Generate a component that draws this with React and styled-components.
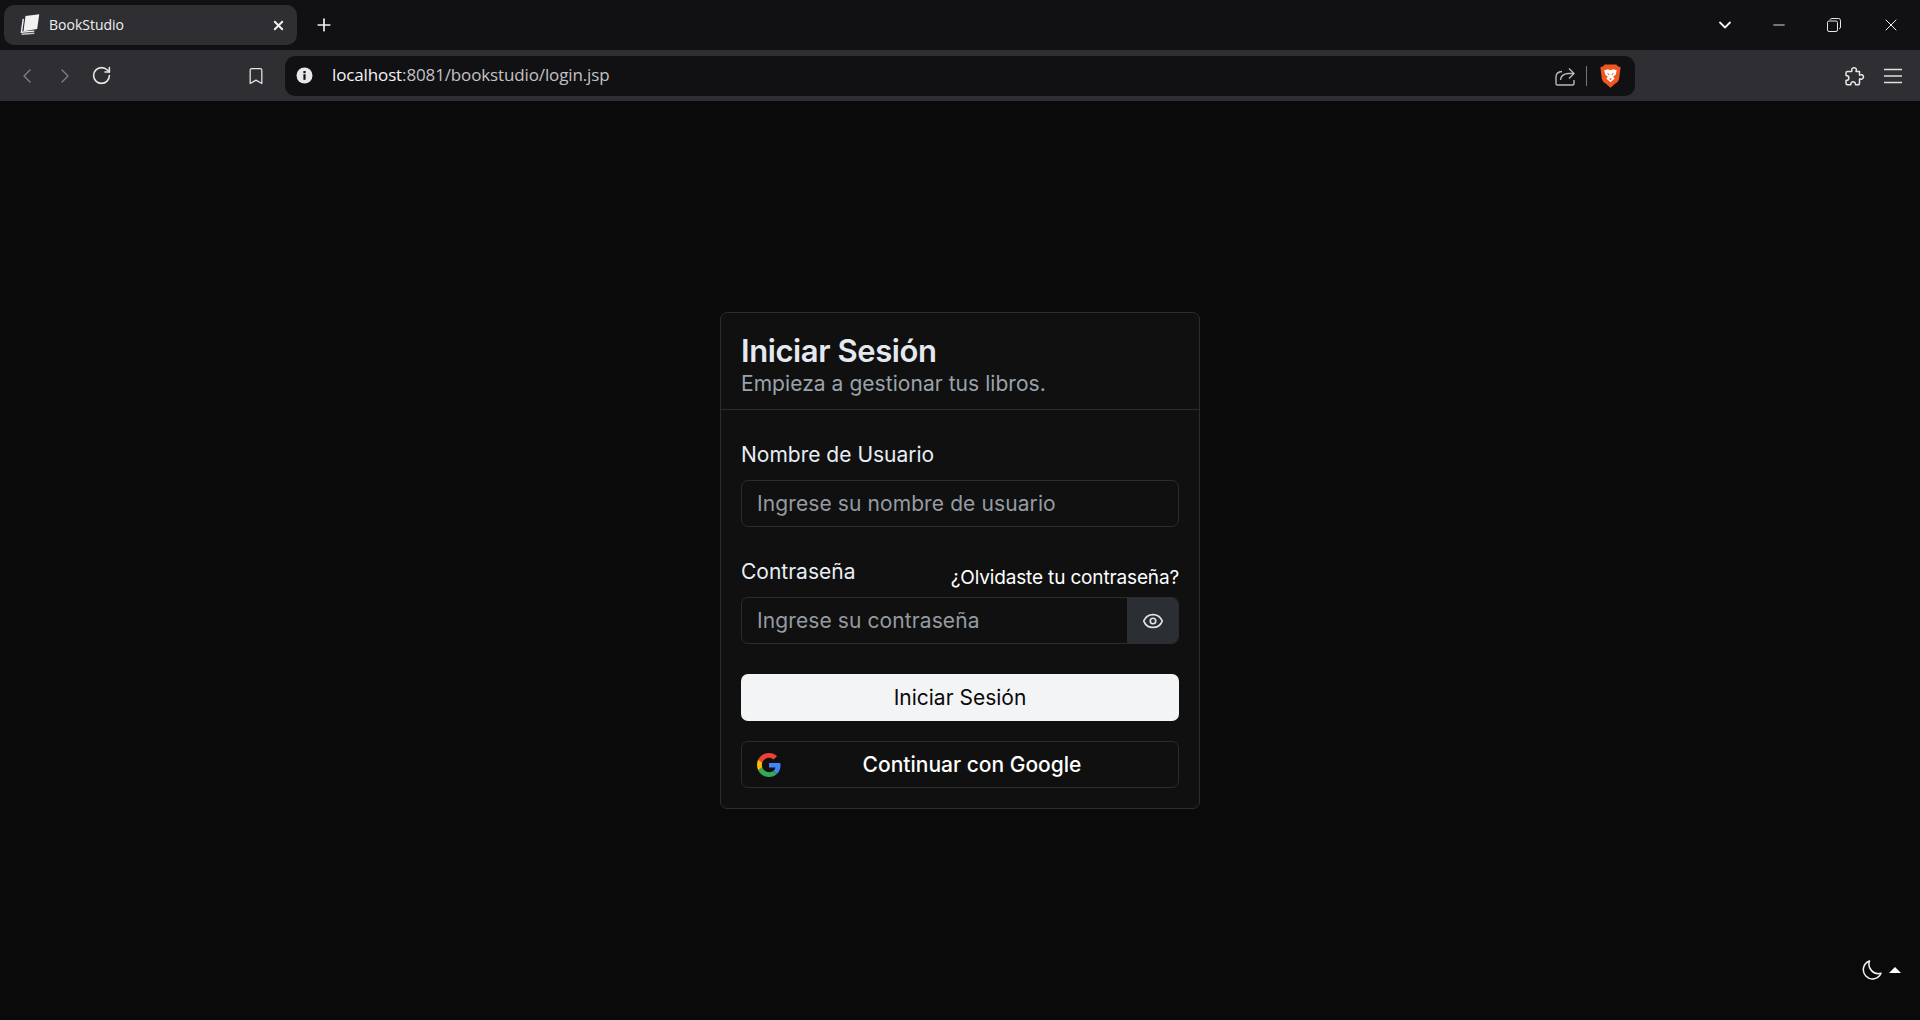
import React from 'react'
import styled, { createGlobalStyle } from 'styled-components'
import { ChevronLeft, ChevronRight, RotateCw, Bookmark, Eye, Plus, X, Minus, ChevronDown } from 'lucide-react'

const GlobalStyle = createGlobalStyle`
  html, body { margin: 0; padding: 0; background: #0a0a0a; }
  * { box-sizing: border-box; }
`

const Window = styled.div`
  width: 1920px;
  height: 1020px;
  display: flex;
  flex-direction: column;
  overflow: hidden;
  font-family: Inter, "Liberation Sans", sans-serif;
`
const TabStrip = styled.div`
  height: 50px;
  flex: none;
  display: flex;
  align-items: center;
  padding-left: 4px;
  background: #111113;
  color: #f2f2f2;
`
const Tab = styled.div`
  width: 293px;
  height: 40px;
  display: flex;
  align-items: center;
  padding: 0 11px 0 16px;
  background: #2f2f33;
  border-radius: 10px;
  font-family: "Open Sans", "Liberation Sans", sans-serif;
  font-size: 14px;
  color: #f0f0f0;
`
const TabTitle = styled.span`
  flex: 1;
  margin-left: 7px;
  padding-bottom: 1px;
`
const NewTab = styled.div`
  display: flex;
  margin-left: 17px;
`
const WindowControls = styled.div`
  margin-left: auto;
  display: flex;
  align-items: center;
`
const WindowButton = styled.div`
  width: ${p => p.$w}px;
  display: flex;
  justify-content: center;
`
const Toolbar = styled.div`
  height: 51px;
  flex: none;
  display: flex;
  align-items: center;
  background: #2f2f33;
  color: #e6e6e6;
`
const NavGroup = styled.div`
  width: 285px;
  flex: none;
  display: flex;
  align-items: center;
  padding-left: 15px;
`
const NavButton = styled.div`
  width: ${p => p.$w || 38}px;
  display: flex;
  justify-content: ${p => p.$end ? 'flex-end' : 'flex-start'};
  color: ${p => p.$dim ? '#808085' : '#e6e6e6'};
`
const AddressBar = styled.div`
  width: 1350px;
  height: 40px;
  flex: none;
  display: flex;
  align-items: center;
  padding: 0 14px 0 11px;
  background: #111113;
  border-radius: 10px;
`
const Url = styled.div`
  flex: 1;
  margin-left: 19px;
  padding-bottom: 2px;
  font-family: "Open Sans", "Liberation Sans", sans-serif;
  font-size: 17px;
  letter-spacing: -0.13px;
  color: #c2c2c6;
  b { font-weight: 400; color: #f4f4f4; }
`
const Divider = styled.div`
  width: 1px;
  height: 20px;
  margin: 0 13px 0 11px;
  background: #77777b;
`
const ToolbarEnd = styled.div`
  flex: 1;
  display: flex;
  align-items: center;
  justify-content: flex-end;
  gap: 18px;
  padding-right: 17px;
`
const Page = styled.main`
  flex: 1;
  display: flex;
  align-items: center;
  justify-content: center;
  background: #0a0a0a;
  position: relative;
`
const Card = styled.section`
  width: 480px;
  height: 497px;
  background: #101010;
  border: 1px solid #2b2c2e;
  border-radius: 7px;
  color: #f3f4f6;
`
const CardHeader = styled.header`
  height: 97px;
  padding: 18px 20px 0;
  border-bottom: 1px solid #2b2c2e;
`
const Title = styled.h1`
  margin: 0;
  font-size: 31px;
  line-height: 39px;
  font-weight: 600;
  letter-spacing: -0.4px;
  color: #e4e9f0;
`
const Subtitle = styled.p`
  margin: 1px 0 0;
  font-size: 21px;
  line-height: 26px;
  letter-spacing: 0.05px;
  color: #9aa3ab;
`
const CardBody = styled.div`
  padding: 30px 20px 0;
  display: flex;
  flex-direction: column;
`
const Label = styled.label`
  display: block;
  font-size: 21px;
  line-height: 30px;
  color: #e8eef4;
`
const LabelRow = styled.div`
  margin-top: 30px;
  height: 40px;
  display: flex;
  justify-content: space-between;
`
const Forgot = styled.a`
  font-size: 19px;
  line-height: 30px;
  padding-top: 6px;
  letter-spacing: -0.15px;
  color: #fff;
`
const InputGroup = styled.div`
  margin-top: ${p => p.$mt || 0}px;
  height: 47px;
  display: flex;
  border: 1px solid #2b2c2e;
  border-radius: 7px;
  overflow: hidden;
`
const Input = styled.input`
  flex: 1;
  min-width: 0;
  padding: 0 15px;
  border: 0;
  outline: 0;
  background: transparent;
  font-family: inherit;
  font-size: 21px;
  letter-spacing: 0.1px;
  color: #f3f4f6;
  &::placeholder { color: #959ba2; opacity: 1; }
`
const EyeButton = styled.div`
  width: 51px;
  display: flex;
  align-items: center;
  justify-content: center;
  background: #2b2f33;
  color: #dfe3e7;
`
const PrimaryButton = styled.button`
  margin-top: 30px;
  height: 47px;
  border: 0;
  border-radius: 7px;
  background: #f3f4f6;
  font-family: inherit;
  font-size: 21px;
  color: #0a0a0a;
`
const GoogleButton = styled.button`
  margin-top: 20px;
  height: 47px;
  display: flex;
  align-items: center;
  padding: 0 15px;
  border: 1px solid #2b2c2e;
  border-radius: 7px;
  background: transparent;
  font-family: inherit;
  font-size: 21px;
  font-weight: 500;
  color: #fff;
  span { flex: 1; text-align: center; }
`
const ThemeToggle = styled.div`
  position: absolute;
  right: 19px;
  bottom: 40px;
  display: flex;
  align-items: center;
  gap: 7px;
  color: #f2f2f2;
`
const Caret = styled.div`
  width: 0;
  height: 0;
  border-left: 6px solid transparent;
  border-right: 6px solid transparent;
  border-bottom: 6px solid #fff;
`

const BookIcon = () => (
  <svg width="22" height="22" viewBox="0 0 20 20">
    <path d="M5 1.8 L17.5 0.2 L15.6 13.6 L3.2 15.6 Z" fill="#f2f2f2" />
    <path d="M3 4.5 L1.3 16.5 L13 15.6" fill="none" stroke="#f2f2f2" strokeWidth="1.3" />
    <path d="M1.5 18.4 L13 17.5" fill="none" stroke="#c8c8c8" strokeWidth="1.2" />
  </svg>
)
const RestoreIcon = () => (
  <svg width="14" height="14" viewBox="0 0 14 14" fill="none" stroke="#e6e6e6" strokeWidth="1">
    <rect x="0.5" y="3" width="10" height="10.5" rx="1.5" />
    <path d="M3 1.8 Q3.4 .5 5 .5 H11.5 Q13.5 .5 13.5 2.5 V9 Q13.5 10.4 12.2 10.8" />
  </svg>
)
const InfoIcon = () => (
  <svg width="17" height="17" viewBox="0 0 17 17">
    <circle cx="8.5" cy="8.5" r="8" fill="#e8e8e8" />
    <rect x="7.4" y="7.2" width="2.2" height="5.6" fill="#111113" />
    <rect x="7.4" y="4" width="2.2" height="2.2" fill="#111113" />
  </svg>
)
const ShareIcon = () => (
  <svg width="20" height="20" viewBox="0 0 20 20" fill="none" stroke="#b8b8bc" strokeWidth="1.4">
    <path d="M7 5.5 Q1 6 1 11 V17.5 Q1 19 2.5 19 H17.5 Q19 19 19 17.5 V14" />
    <path d="M5.5 14 Q6 8 13 7.5 H18.5 M14 2.5 L19 7.5 L14 12.5" />
  </svg>
)
const BraveIcon = () => (
  <svg width="21" height="24" viewBox="0 0 20 23">
    <path d="M4.5 0.5 H15.5 L17 2.2 L19.7 3.2 L18.2 14.5 Q17.5 17 15 18.5 L10 22.7 L5 18.5 Q2.5 17 1.8 14.5 L0.3 3.2 L3 2.2 Z" fill="#f1561f" />
    <path d="M4 6 L7.5 5 L10 6 L12.5 5 L16 6 L15 10 L12.5 12.5 L14 14 L10 17.5 L6 14 L7.5 12.5 L5 10 Z" fill="#fff" />
    <path d="M6.5 8.5 L9 9.5 L8.5 11 Z M13.5 8.5 L11 9.5 L11.5 11 Z M8.5 14 H11.5 L10 15.5 Z" fill="#f1561f" />
  </svg>
)
const PuzzleIcon = () => (
  <svg width="20" height="20" viewBox="0 0 20 20" fill="none" stroke="#e6e6e6" strokeWidth="1.5" strokeLinejoin="round">
    <path d="M2.5 5.5 H6.5 Q7 5.5 6.8 4.6 C5.8 1.6 11.2 .6 11.4 3.6 Q11.4 4.6 11 5 Q10.8 5.5 11.5 5.5 H14.5 V8.8 Q14.5 9.5 15.2 9 C17.6 7.4 20.2 11.6 17 13 Q15.8 13.4 15 12.8 Q14.5 12.5 14.5 13.2 V17 Q14.5 18.8 12.8 18.8 H10.5 C10.8 14.8 5.4 14.8 5.8 18.8 H3 Q1 18.8 1 17 V14.5 C4.8 14.4 4.8 9.6 1 9.6 V7 Q1 5.5 2.5 5.5 Z" />
  </svg>
)
const MenuIcon = () => (
  <svg width="20" height="16" viewBox="0 0 20 16" fill="none" stroke="#e0e0e0" strokeWidth="1.5">
    <path d="M1 1.5 H19 M1 8 H19 M1 14.5 H19" />
  </svg>
)
const MoonIcon = () => (
  <svg width="20" height="20" viewBox="0 0 20 20" fill="none" stroke="#f2f2f2" strokeWidth="1.5" strokeLinejoin="round">
    <path d="M7.5 1 A9.2 9.2 0 1 0 19 13.3 A9.5 9.5 0 0 1 7.5 1 Z" />
  </svg>
)
const GoogleIcon = () => (
  <svg width="24" height="24" viewBox="0 0 48 48">
    <path fill="#EA4335" d="M24 9.5c3.54 0 6.71 1.22 9.21 3.6l6.85-6.85C35.9 2.38 30.47 0 24 0 14.62 0 6.51 5.38 2.56 13.22l7.98 6.19C12.43 13.72 17.74 9.5 24 9.5z" />
    <path fill="#4285F4" d="M46.98 24.55c0-1.57-.15-3.09-.38-4.55H24v9.02h12.94c-.58 2.96-2.26 5.48-4.78 7.18l7.73 6c4.51-4.18 7.09-10.36 7.09-17.65z" />
    <path fill="#FBBC05" d="M10.53 28.59c-.48-1.45-.76-2.99-.76-4.59s.27-3.14.76-4.59l-7.98-6.19C.92 16.46 0 20.12 0 24c0 3.88.92 7.54 2.56 10.78l7.97-6.19z" />
    <path fill="#34A853" d="M24 48c6.48 0 11.93-2.13 15.89-5.81l-7.73-6c-2.15 1.45-4.92 2.3-8.16 2.3-6.26 0-11.57-4.22-13.47-9.91l-7.98 6.19C6.51 42.62 14.62 48 24 48z" />
  </svg>
)

const App = () => (
  <Window>
    <GlobalStyle />
    <TabStrip>
      <Tab>
        <BookIcon />
        <TabTitle>BookStudio</TabTitle>
        <X size={15} strokeWidth={3} />
      </Tab>
      <NewTab><Plus size={20} strokeWidth={2} /></NewTab>
      <WindowControls>
        <WindowButton $w={52}><ChevronDown size={20} strokeWidth={2.2} /></WindowButton>
        <WindowButton $w={55}><Minus size={18} strokeWidth={1.2} /></WindowButton>
        <WindowButton $w={56}><RestoreIcon /></WindowButton>
        <WindowButton $w={58}><X size={20} strokeWidth={1.2} /></WindowButton>
      </WindowControls>
    </TabStrip>
    <Toolbar>
      <NavGroup>
        <NavButton $dim><ChevronLeft size={24} strokeWidth={1.3} /></NavButton>
        <NavButton $dim><ChevronRight size={24} strokeWidth={1.3} /></NavButton>
        <NavButton $w={50}><RotateCw size={21} strokeWidth={1.8} /></NavButton>
        <NavButton $w={125} $end><Bookmark size={20} strokeWidth={1.5} /></NavButton>
      </NavGroup>
      <AddressBar>
        <InfoIcon />
        <Url><b>localhost</b>:8081/bookstudio/login.jsp</Url>
        <ShareIcon />
        <Divider />
        <BraveIcon />
      </AddressBar>
      <ToolbarEnd>
        <PuzzleIcon />
        <MenuIcon />
      </ToolbarEnd>
    </Toolbar>
    <Page>
      <Card>
        <CardHeader>
          <Title>Iniciar Sesión</Title>
          <Subtitle>Empieza a gestionar tus libros.</Subtitle>
        </CardHeader>
        <CardBody>
          <Label>Nombre de Usuario</Label>
          <InputGroup $mt={10}>
            <Input placeholder="Ingrese su nombre de usuario" />
          </InputGroup>
          <LabelRow>
            <Label>Contraseña</Label>
            <Forgot>¿Olvidaste tu contraseña?</Forgot>
          </LabelRow>
          <InputGroup>
            <Input placeholder="Ingrese su contraseña" />
            <EyeButton><Eye size={22} strokeWidth={1.8} /></EyeButton>
          </InputGroup>
          <PrimaryButton>Iniciar Sesión</PrimaryButton>
          <GoogleButton>
            <GoogleIcon />
            <span>Continuar con Google</span>
          </GoogleButton>
        </CardBody>
      </Card>
      <ThemeToggle>
        <MoonIcon />
        <Caret />
      </ThemeToggle>
    </Page>
  </Window>
)

export default App
